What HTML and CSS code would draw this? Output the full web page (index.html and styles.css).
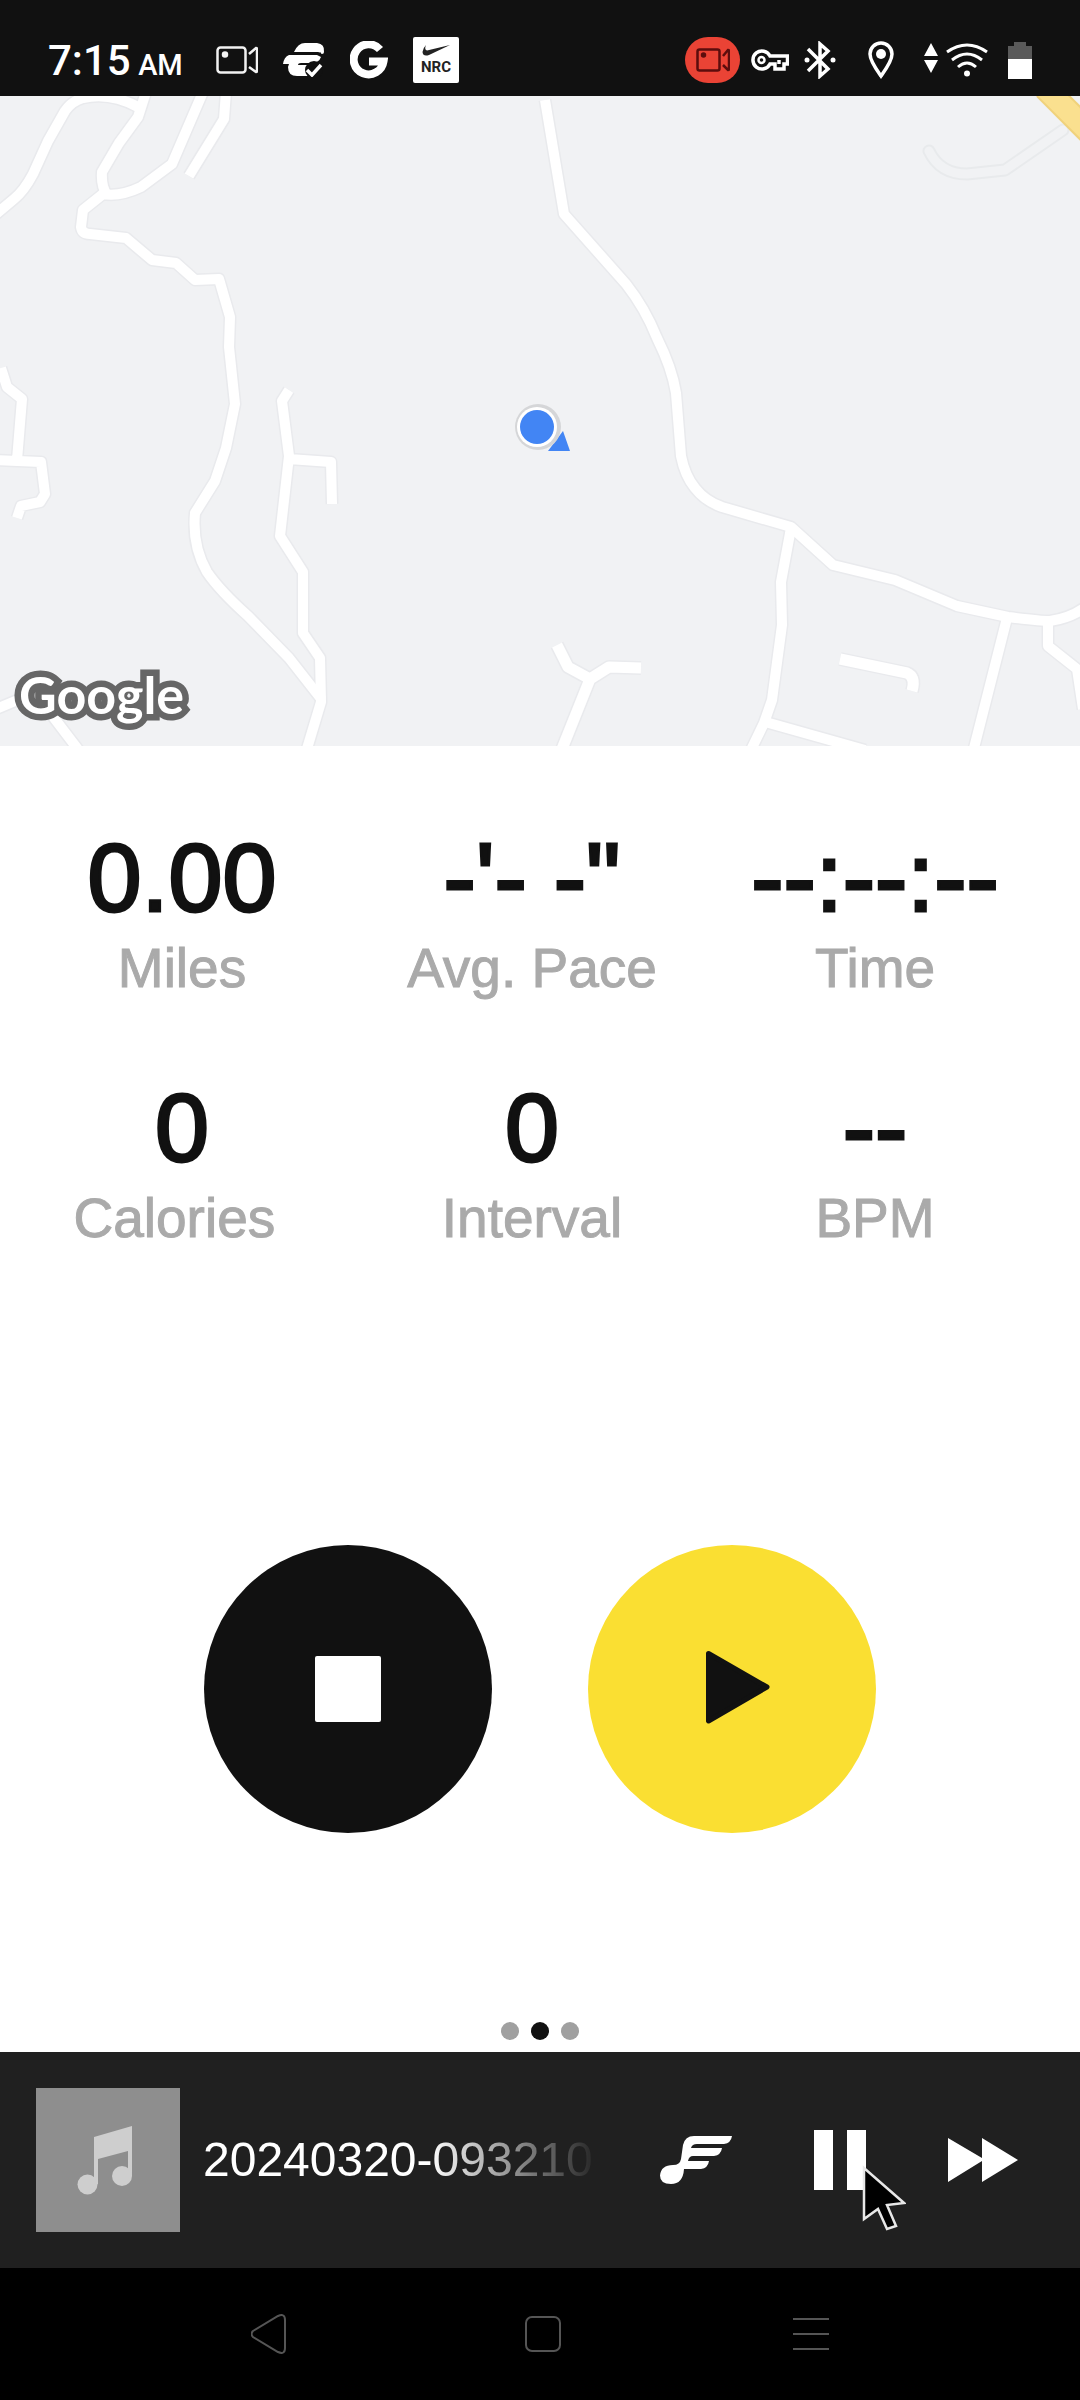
FILE: index.html
```html
<!DOCTYPE html>
<html lang="en">
<head>
<meta charset="utf-8">
<meta name="viewport" content="width=device-width, initial-scale=1">
<title>Run in progress</title>
<link rel="stylesheet" href="styles.css">
</head>
<body>
<div class="screen">
  <header class="status">
    <div class="status-left">
      <span class="clock">7:15 <small class="meridiem">AM</small></span>
      <svg class="icon-cam" width="42" height="28" viewBox="0 0 42 28" fill="none" stroke="#f2f2f2" stroke-width="2.500"><rect x="1.500" y="1.500" width="28" height="25" rx="3"/><path d="M33 8l7-6q1 0 1 1v22q0 1-1 1l-7-5"/><circle cx="9" cy="8.500" r="2" fill="#f2f2f2"/></svg>
      <svg class="icon-pass" width="42" height="34" viewBox="0 0 42 34"><path fill="#fff" d="M11 9Q15 0 22 0H34Q42 1 41 9 41 11 39 11L35 9zM6 12H34L38 14Q36 20 28 20H18Q15 20 15 22H27V33H14Q5 33 5 24L6 21H0Q1 14 6 12z"/><path fill="none" stroke="#111" stroke-width="2" d="M9 10.500H38"/><circle cx="31" cy="27" r="9" fill="#111"/><path fill="none" stroke="#fff" stroke-width="3.500" d="M24 27l5 5 9-10"/></svg>
      <svg class="icon-g" width="38" height="38" viewBox="0 0 38 38" fill="none" stroke="#fff" stroke-width="8"><path d="M30 8.500A15 15 0 1 0 33.500 20.500H19"/></svg>
      <span class="nrc"><svg width="28" height="11" viewBox="0 0 28 11"><path fill="#222" d="M4 0Q2 5 5 5.500L28 0 7 10Q1 12 .500 7 1 3 4 0z"/></svg><span>NRC</span></span>
    </div>
    <div class="status-right">
      <span class="rec"><svg width="34" height="24" viewBox="0 0 34 24" fill="none" stroke="#5c0d0d" stroke-width="2.500"><rect x="1.500" y="1.500" width="22" height="21" rx="2"/><path d="M27 8l5-6q1 0 1 1v18q0 1-1 1l-5-5"/><circle cx="7.500" cy="7" r="1.500" fill="#5c0d0d"/></svg></span>
      <svg class="icon-key" width="38" height="22" viewBox="0 0 38 22" fill="none" stroke="#fff" stroke-width="3.500"><path d="M19 7A9 9 0 1 0 19 15h5v5h9v-5h3.500V7z"/><path d="M28 11v4"/><circle cx="10.500" cy="11" r="3" stroke-width="2.500"/></svg>
      <svg class="icon-bt" width="32" height="38" viewBox="0 0 32 38" fill="none" stroke="#fff" stroke-width="3.500"><path d="M4 8l20 20-8 7V3l8 7L4 30"/><circle cx="3" cy="19" r="2.500" fill="#fff" stroke="none"/><circle cx="29" cy="19" r="2.500" fill="#fff" stroke="none"/></svg>
      <svg class="icon-pin" width="26" height="38" viewBox="0 0 26 38" fill="none" stroke="#fff" stroke-width="3.500"><path d="M13 35C8 28 2 20 2 13a11 11 0 0 1 22 0c0 7-6 15-11 22z"/><circle cx="13" cy="13" r="5" fill="#fff" stroke="none"/></svg>
      <svg class="icon-data" width="14" height="38" viewBox="0 0 14 38" fill="#fff"><path d="M7 2l7 13H0zM0 19h14L7 32z"/></svg>
      <svg class="icon-wifi" width="42" height="34" viewBox="0 0 42 34" fill="none" stroke="#fff" stroke-width="3"><path d="M1 9Q21-5 41 9M6 17Q21 5 36 17M12 24Q21 16 30 24"/><circle cx="21" cy="30.500" r="3" fill="#fff" stroke="none"/></svg>
      <svg class="icon-batt" width="24" height="37" viewBox="0 0 24 37"><path fill="#5a5a5a" d="M6 0h12v4h6v14H0V4h6z"/><path fill="#fff" d="M0 17h24v20H0z"/></svg>
    </div>
  </header>

  <main class="run">
    <section class="map" aria-label="Map">
      <svg class="map-art" viewBox="0 0 1080 650">
        <defs>
          <g id="roads">
            <path d="M-4 118L14 103Q24 95 33 78L48 45 65 15Q72 5 83 2 110-4 138 11"/>
            <path d="M146-4L138 21 119 47 102 76Q101 90 107 99"/>
            <path d="M203-4L172 68 141 91Q120 101 103 98L83 114 81 131Q82 138 90 138L126 142 152 164 176 167 195 184 219 183 230 221 229 251 235 308 226 352 215 385 195 417Q192 450 207 476 220 495 248 520L289 562 322 604"/>
            <path d="M226-4L224 23 189 80"/>
            <path d="M1 272L7 291 22 303 17 364M-4 364L41 366 45 398 40 406 21 410 17 422"/>
            <path d="M289 294L282 305 289 360 280 440 303 476V537L320 562 321 606 306 656M289 363L331 366 332 408"/>
            <path d="M-4 613L20 603M48 614L80 656"/>
            <path d="M545 4L564 118 626 188Q645 212 657 242 672 272 676 297L681 360Q685 380 695 392 705 405 722 411L791 431 833 469 895 484 957 510 1008 521Q1040 525 1050 525 1070 522 1084 512"/>
            <path d="M791 432L781 486 782 529 772 604 764 627 750 656M762 625L865 654"/>
            <path d="M1007 522L973 656M1048 524V550L1077 573 1083 613"/>
          </g>
          <g id="lanes">
            <path d="M557 549L568 571 590 583 609 571 641 572M590 583L560 658"/>
            <path d="M840 563L907 577Q916 581 912 595"/>
          </g>
        </defs>
        <rect width="1080" height="650" fill="#f1f2f4"/>
        <g fill="none" stroke-linejoin="round">
          <path d="M929 55Q940 78 967 78L1005 74 1063 34" stroke="#e8eaec" stroke-width="13" stroke-linecap="round"/>
          <path d="M929 55Q940 78 967 78L1005 74 1063 34" stroke="#f1f2f4" stroke-width="9" stroke-linecap="round"/>
          <use href="#roads" stroke="#e9eaed" stroke-width="13"/>
          <use href="#lanes" stroke="#e9eaed" stroke-width="14"/>
          <use href="#roads" stroke="#fff" stroke-width="10"/>
          <use href="#lanes" stroke="#fff" stroke-width="11"/>
          <path d="M1045-8L1093 40" stroke="#f0d27c" stroke-width="25"/>
          <path d="M1045-8L1093 40" stroke="#fae08f" stroke-width="21"/>
        </g>
        <path d="M563 335L570 355H548z" fill="#4285f4"/>
        <circle cx="538" cy="331" r="23" fill="#d5d6d8"/>
        <circle cx="537" cy="331" r="20" fill="#fff"/>
        <circle cx="537" cy="331" r="17" fill="#4285f4"/>
      </svg>
      <span class="map-brand">Google</span>
    </section>

    <dl class="stats">
      <div class="stat"><dd>0.00</dd><dt>Miles</dt></div>
      <div class="stat"><dd>-'- -"</dd><dt>Avg. Pace</dt></div>
      <div class="stat"><dd>--:--:--</dd><dt>Time</dt></div>
      <div class="stat"><dd>0</dd><dt>Calories&nbsp;</dt></div>
      <div class="stat"><dd>0</dd><dt>Interval</dt></div>
      <div class="stat"><dd>--</dd><dt>BPM</dt></div>
    </dl>

    <div class="controls">
      <button class="round stop" type="button" aria-label="Stop"><svg width="66" height="66" viewBox="0 0 66 66"><rect width="66" height="66" rx="2" fill="#fff"/></svg></button>
      <button class="round play" type="button" aria-label="Resume"><svg width="76" height="76" viewBox="0 0 76 76"><path d="M14.500 2.500L73 36 14.500 70z" fill="#111" stroke="#111" stroke-width="5" stroke-linejoin="round"/></svg></button>
    </div>

    <div class="pager" aria-label="Page 2 of 3"><span></span><span class="current"></span><span></span></div>
  </main>

  <section class="player" aria-label="Music">
    <div class="cover"><svg width="56" height="70" viewBox="0 0 56 70" fill="#cecece"><path d="M17 12L55 1v50h-4V26L21 34v25h-4z"/><circle cx="10.500" cy="59.500" r="10"/><circle cx="45" cy="51" r="10"/></svg></div>
    <p class="track">20240320-093210</p>
    <div class="player-buttons">
      <button type="button" aria-label="Music source"><svg width="72" height="48" viewBox="0 0 72 48" fill="#fff"><path d="M34 0H72Q71 7 64 8H37Q32 8 31 12H62Q61 19 54 20H33Q29 20 28 25H49Q48 32 41 33H24Q23 48 11 48 0 48 0 39.500 1 29 13 29 20 29 21 23L23 9Q25 0 34 0z"/></svg></button>
      <button class="pause" type="button" aria-label="Pause"><svg width="52" height="60" viewBox="0 0 52 60" fill="#fff"><path d="M0 0h19v60H0zM33 0h19v60H33z"/></svg>
        <svg class="pointer" width="44" height="68" viewBox="0 0 44 68"><path d="M2 3V54L16 44 25 64 34 61 25 40 42 38z" fill="#000" stroke="#e8e8e8" stroke-width="2.500"/></svg></button>
      <button type="button" aria-label="Next track"><svg width="70" height="44" viewBox="0 0 70 44" fill="#fff"><path d="M0 0L34 20V0L70 22 34 44V23L0 44z"/></svg></button>
    </div>
  </section>

  <nav class="navbar" aria-label="System">
    <button type="button" aria-label="Back"><svg width="42" height="40" viewBox="0 0 42 40"><path d="M2 17L27 2Q34-1 34 6V34Q34 41 27 38L2 23Q-1 20 2 17z"/></svg></button>
    <button type="button" aria-label="Home"><svg width="36" height="36" viewBox="0 0 36 36"><rect x="1" y="1" width="34" height="34" rx="6"/></svg></button>
    <button type="button" aria-label="Recent apps"><svg width="36" height="34" viewBox="0 0 36 34"><path d="M0 2h36M0 17h36M0 32h36"/></svg></button>
  </nav>
</div>
</body>
</html>
```
FILE: styles.css
```css
* { box-sizing: border-box; margin: 0; padding: 0; }

body {
  background: #fff;
  color: #111;
  font-family: "Liberation Sans", Arial, sans-serif;
}

button { border: 0; background: none; cursor: pointer; }
svg { display: block; flex: none; }

.screen { display: flex; flex-direction: column; min-height: 100vh; }

/* Status bar */
.status {
  display: flex;
  justify-content: space-between;
  height: 96px;
  padding: 24px 48px 0;
  background: #111;
  color: #fff;
}
.status-left, .status-right { display: flex; align-items: center; }
.status-left { gap: 25px; }
.clock { width: 143px; padding-top: 6px; font: 500 42px/48px Roboto, sans-serif; white-space: nowrap; }
.meridiem { font-size: 29px; margin-left: -3px; }
.nrc {
  display: flex;
  flex-direction: column;
  align-items: center;
  width: 46px;
  height: 46px;
  padding-top: 8px;
  border-radius: 2px;
  background: #fff;
  color: #222;
  font: 700 15px/22px Roboto, sans-serif;
}
.status-right { gap: 8px; }
.rec {
  display: flex;
  align-items: center;
  justify-content: center;
  width: 55px;
  height: 46px;
  border-radius: 23px;
  background: #ea4335;
}
.icon-key { margin-left: 3px; }
.icon-bt { margin-left: 7px; }
.icon-pin { margin-left: 24px; }
.icon-data { margin-left: 22px; }
.icon-batt { margin-left: 12px; }

/* Map and run figures */
.run { display: flex; flex: 1; flex-direction: column; }
.map { position: relative; }
.map-art { width: 100%; height: auto; }
.map-brand {
  position: absolute;
  left: 19px;
  bottom: 20px;
  color: #fff;
  font: 700 52px/64px Lato, sans-serif;
  -webkit-text-stroke: 13px #666;
  paint-order: stroke fill;
}
.stats {
  display: grid;
  grid-template-columns: 350fr 350fr 336fr;
  row-gap: 80px;
  padding: 84px 37px 0 7px;
  text-align: center;
  white-space: nowrap;
}
.stat { display: flex; flex-direction: column; gap: 10px; }
.stat dd { font-size: 97px; line-height: 96px; -webkit-text-stroke: 3px #111; }
.stat dt { color: #aaa; font-size: 55px; line-height: 64px; -webkit-text-stroke: 1px #aaa; }

.controls { display: flex; justify-content: center; gap: 96px; padding-top: 295px; }
.round {
  display: flex;
  align-items: center;
  justify-content: center;
  width: 288px;
  height: 288px;
  border-radius: 50%;
}
.stop { background: #111; }
.play { background: #fadf32; }

.pager { display: flex; justify-content: center; gap: 12px; margin-top: auto; padding: 24px 0 12px; }
.pager span { width: 18px; height: 18px; border-radius: 50%; background: #a0a0a0; }
.pager .current { background: #111; }

/* Music player */
.player {
  display: flex;
  align-items: center;
  height: 216px;
  padding: 0 62px 0 36px;
  background: #202020;
  color: #fff;
}
.cover {
  display: flex;
  flex: none;
  align-items: center;
  justify-content: center;
  width: 144px;
  height: 144px;
  padding-right: 6px;
  background: #8e8e8e;
}
.track {
  flex: 1;
  margin: 0 60px 0 23px;
  overflow: hidden;
  font-size: 48px;
  line-height: 56px;
  white-space: nowrap;
  -webkit-mask-image: linear-gradient(to right, #000 57%, transparent);
  mask-image: linear-gradient(to right, #000 57%, transparent);
}
.player-buttons { display: flex; align-items: center; gap: 82px; }
.pause { position: relative; }
.pointer { position: absolute; left: 48px; top: 35px; }

/* System navigation */
.navbar {
  display: flex;
  align-items: center;
  justify-content: space-around;
  height: 132px;
  padding: 0 12.5%;
  background: #000;
}
.navbar svg { fill: none; stroke: #555; stroke-width: 2; }
```
